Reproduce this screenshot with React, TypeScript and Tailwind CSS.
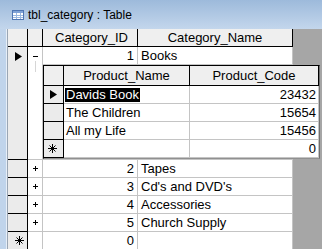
import React from "react";

const Tri = () => (
  <svg width="7" height="9" viewBox="0 0 7 9" className="block">
    <polygon points="0,0 7,4.5 0,9" fill="#000" />
  </svg>
);

const Star = () => (
  <svg width="9" height="9" viewBox="0 0 9 9" className="block" stroke="#000" strokeWidth="1" fill="none">
    <path d="M4.5 0V9M0 4.5H9M1.5 1.5L7.5 7.5M7.5 1.5L1.5 7.5" />
  </svg>
);

const Plus = () => (
  <svg width="5" height="5" viewBox="0 0 5 5" className="block" stroke="#000" strokeWidth="1">
    <path d="M2.5 0V5M0 2.5H5" />
  </svg>
);

const TableIcon = () => (
  <svg width="12" height="10" viewBox="0 0 12 10" className="block">
    <rect x="0.5" y="0.5" width="11" height="9" fill="#ffffff" stroke="#4f76b3" />
    <rect x="1" y="1" width="10" height="2" fill="#7fa2d6" />
    <path d="M1 5.5H11M1 7.5H11M4.5 3V9M8.5 3V9" stroke="#9ab8e0" strokeWidth="1" />
  </svg>
);

const hdr = "bg-[#efefef] border-r border-b border-black";
const sel = "bg-[#ebebeb] border-r border-b border-black";
const cell = "bg-white border-r border-b border-[#c4c4c4]";

function MainRow({ id, name, plus = true, isNew = false }: { id: string; name: string; plus?: boolean; isNew?: boolean }) {
  return (
    <div className="flex h-[18px] shrink-0">
      <div className={`w-[20px] ${sel} flex items-center pl-[7px]`}>{isNew ? <Star /> : null}</div>
      <div className={`w-[15px] ${cell} flex items-center pl-[5px]`}>{plus ? <Plus /> : null}</div>
      <div className={`w-[95px] ${cell} flex items-center justify-end pr-[3px]`}>{id}</div>
      <div className={`w-[155px] ${cell} flex items-center pl-[3px] whitespace-nowrap`}>{name}</div>
    </div>
  );
}

function SubRow({
  name,
  code,
  mark,
  selected = false,
}: {
  name: string;
  code: string;
  mark?: "tri" | "star";
  selected?: boolean;
}) {
  return (
    <div className="flex h-[18px]">
      <div className={`w-[20px] ${sel} flex items-center`}>
        {mark === "tri" ? (
          <div className="pl-[6px]">
            <Tri />
          </div>
        ) : mark === "star" ? (
          <div className="pl-[4px]">
            <Star />
          </div>
        ) : null}
      </div>
      <div className={`w-[126px] ${cell} flex items-center whitespace-nowrap ${selected ? "pl-[1px]" : "pl-[2px]"}`}>
        {selected ? <span className="bg-black text-white px-[1px] leading-[14px]">{name}</span> : name}
      </div>
      <div className={`w-[129px] ${cell} flex items-center justify-end pr-[2px]`}>{code}</div>
    </div>
  );
}

export default function App() {
  return (
    <div className="w-[322px] h-[249px] overflow-hidden bg-[#a6a6a6] font-['Liberation_Sans',Arial,sans-serif] text-[13px] leading-none text-black">
      <div className="h-[29px] bg-gradient-to-b from-[#9dbadb] to-[#c3d6ec] flex items-start pl-[12px] pt-[10px] gap-[4px]">
        <TableIcon />
        <span className="text-[12px] leading-[12px] -mt-[1px] whitespace-nowrap">tbl_category : Table</span>
      </div>
      <div className="flex h-[220px]">
        <div className="w-[8px] shrink-0 flex">
          <div className="w-[6px] bg-[#c0d4eb]" />
          <div className="w-[1px] bg-[#e6eef8]" />
          <div className="w-[1px] bg-[#9aa6b4]" />
        </div>
        <div className="flex flex-col">
          {/* header */}
          <div className="flex h-[18px] shrink-0">
            <div className={`w-[20px] ${hdr}`} />
            <div className={`w-[15px] ${hdr}`} />
            <div className={`w-[95px] ${hdr} flex items-center justify-center pl-[3px]`}>Category_ID</div>
            <div className={`w-[155px] ${hdr} flex items-center justify-center`}>Category_Name</div>
          </div>
          {/* row 1 with subdatasheet */}
          <div className="flex h-[113px] shrink-0">
            <div className={`w-[20px] ${sel} pl-[7px] pt-[5px]`}>
              <Tri />
            </div>
            <div className={`w-[15px] ${cell} flex flex-col items-start pl-[5px] pt-[9px]`}>
              <div className="w-[5px] h-[1px] bg-black" />
              <div className="ml-[2px] mt-[4px] w-[1px] h-[11px] bg-[#d6d6d6]" />
            </div>
            <div className="flex flex-col w-[250px]">
              <div className="flex h-[18px] shrink-0">
                <div className={`w-[95px] ${cell} flex items-center justify-end pr-[3px]`}>1</div>
                <div className={`w-[155px] ${cell} flex items-center pl-[3px]`}>Books</div>
              </div>
              <div className="h-[95px] bg-white border-b border-r border-[#c4c4c4]">
                <div className="w-[277px] shrink-0 border-l border-t border-black border-r border-r-[#707070] border-b border-b-[#909090] bg-white">
                  <div className="flex h-[20px]">
                    <div className={`w-[20px] ${hdr}`} />
                    <div className={`w-[126px] ${hdr} flex items-center justify-center`}>Product_Name</div>
                    <div className={`w-[129px] ${hdr} flex items-center justify-center`}>Product_Code</div>
                  </div>
                  <SubRow name="Davids Book" code="23432" mark="tri" selected />
                  <SubRow name="The Children" code="15654" />
                  <SubRow name="All my Life" code="15456" />
                  <SubRow name="" code="0" mark="star" />
                </div>
              </div>
            </div>
          </div>
          <MainRow id="2" name="Tapes" />
          <MainRow id="3" name="Cd's and DVD's" />
          <MainRow id="4" name="Accessories" />
          <MainRow id="5" name="Church Supply" />
          <MainRow id="0" name="" plus={false} isNew />
        </div>
      </div>
    </div>
  );
}
